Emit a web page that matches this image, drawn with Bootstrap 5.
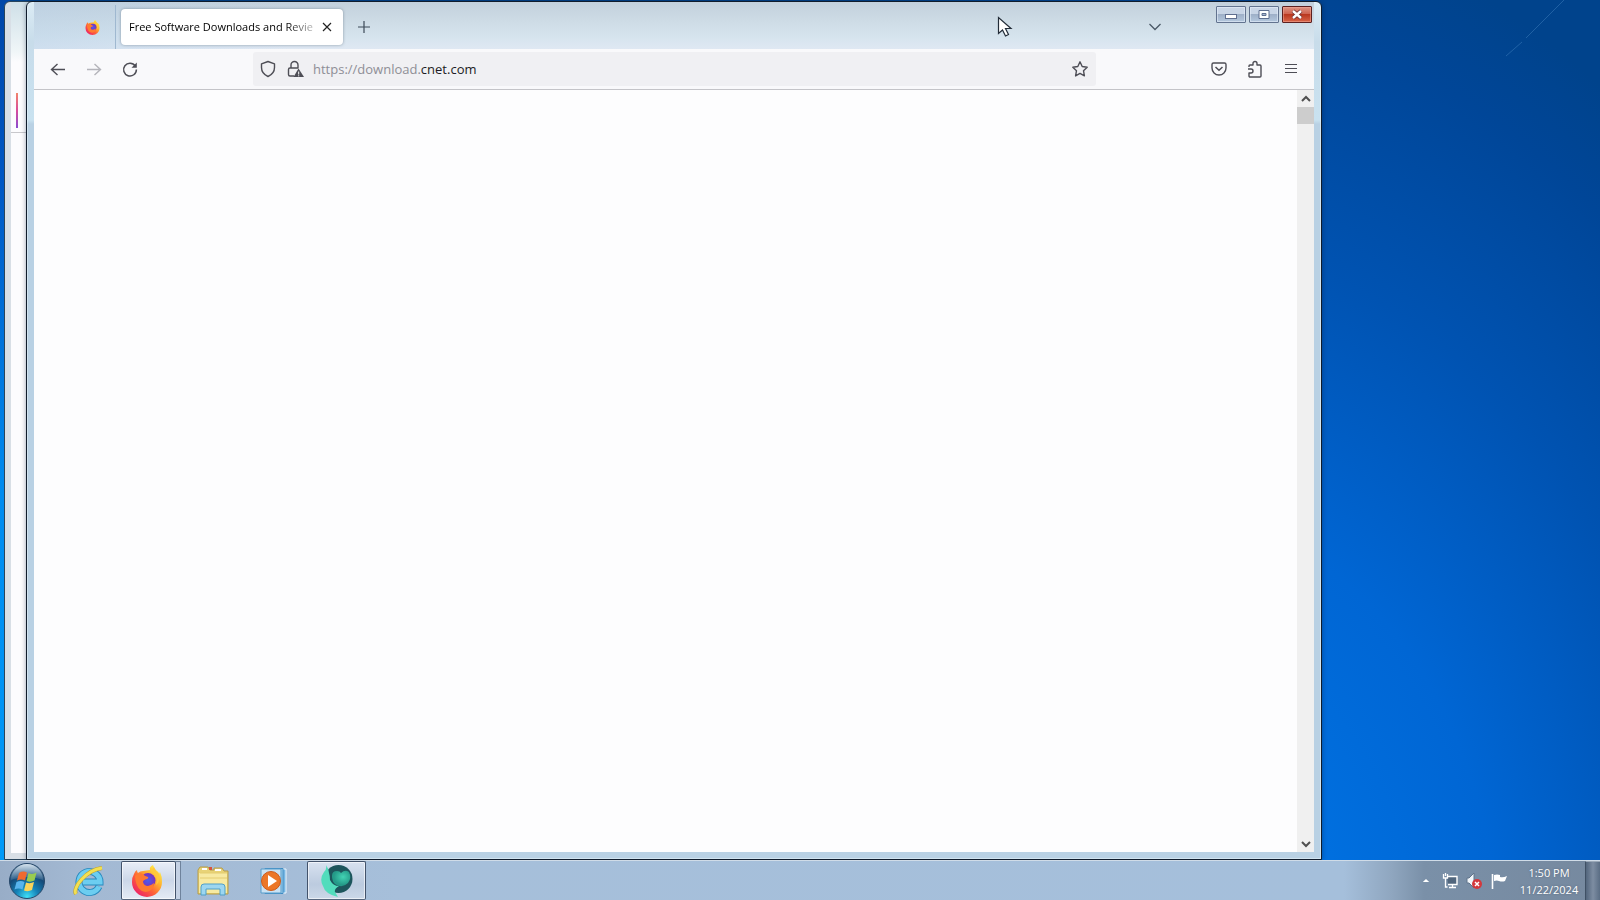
<!DOCTYPE html>
<html lang="en">
<head>
<meta charset="utf-8">
<meta name="viewport" content="width=device-width, initial-scale=1">
<title>Desktop</title>
<link href="https://cdn.jsdelivr.net/npm/bootstrap@5.3.0/dist/css/bootstrap.min.css" rel="stylesheet">
<style>
  body { font-family: "Open Sans", "Noto Sans", sans-serif; font-size: 11px; line-height: 16px; color: #111; }
  svg { display: block; flex: none; }
  button { border: 0; padding: 0; background: none; color: inherit; }

  .desktop {
    background:
      linear-gradient(#0046a8 0, #0058c4 20%, #008cf0 55%, #009cfa 100%) 0 0 / 10px 100% no-repeat,
      radial-gradient(ellipse 760px 1050px at 1180px 960px, #0078e8 0, #0070e0 20%, #0066d4 42%, #0053b2 68%, #004698 90%, #00438c 100%);
    background-color: #00438c;
  }
  .light-streak { right: 36px; top: 0; }

  /* windows */
  .win { bottom: 0; top: 1px; border: 1px solid #101c2c; }
  .win-back { left: 4px; width: 60px; background: #d8dfe6; border-color: #29455c; border-radius: 6px 0 0 0; padding: 0 0 6px 6px; }
  .win-back .pane { background: linear-gradient(#cfe0e8 0, #f0f6f8 50px, #fcfcfe 60px, #fcfcfe 100%); }
  .win-back .pane-top { height: 131px; border-bottom: 1px solid #c8c8cc; }
  .flame { width: 2px; height: 35px; margin: 0 0 4px 5px; background: linear-gradient(#f2856a, #d84c9c 50%, #8a4cd0); }
  .win-front { left: 26px; right: 278px; border-radius: 6px 6px 0 0; padding: 0 7px 7px;
    background: linear-gradient(#dcecf5 0, #c8dcea 40px, #c9e2f0 118px, #b9d1e4 122px, #b9d1e4 100%); box-shadow: inset 0 0 0 1px #e8f6fc88, 0 0 5px #00183866; }
  .titlebar { height: 47px; background: linear-gradient(90deg, #b6d0e866 0, #c8dce800 20%, #c8dce800 100%), linear-gradient(#c2d0dc 0, #ccdae4 35%, #d6e4ee 75%, #dfe8f3 100%); }
  .pinned { width: 82px; border-right: 1px solid #9fb8d0; padding-right: 15px; }
  .tab-page { width: 222px; height: 36px; margin: 0 0 0 5px; background: #fff; border-radius: 4px; box-shadow: 0 0 3px #48586888; padding: 0 11px 0 8px; color: #000; }
  .tab-title { white-space: nowrap; -webkit-mask-image: linear-gradient(90deg, #000 85%, #0004 100%); mask-image: linear-gradient(90deg, #000 85%, #0004 100%); }
  .tab-row { padding-top: 3px; }
  .new-tab { margin-left: 14px; }
  .caption { gap: 3px; padding: 4px 2px 0 0; }
  .cap-btn { width: 30px; height: 17px; border: 1px solid #62738f; border-radius: 1px; box-shadow: inset 0 0 0 1px #e4eefa99; background: linear-gradient(#c8d5e6 0 45%, #9eb0c8 50%, #b4c8de 100%); display: grid; place-items: center; }
  .cap-close { border-color: #5c2020; box-shadow: inset 0 0 0 1px #f0a89888; background: linear-gradient(#dd9585 0, #cf6350 45%, #b93820 50%, #d86448 100%); }
  .all-tabs { margin-right: 54px; }

  .toolbar { height: 41px; background: #f9f9fb; border-bottom: 1px solid #c4c4c8; color: #4e4e56; padding: 0 14px 0 15px; }
  .nav-tools { gap: 18px; width: 204px; }
  .right-tools { gap: 18px; width: 204px; }
  .address { height: 34px; background: #f0f0f3; border-radius: 3px; gap: 9px; padding: 0 7px 0 6px; }
  .address-wrap { height: 20px; }
  .address-text { font-size: 13px; line-height: 20px; color: #8e8e96; pointer-events: none; inset: 0; white-space: pre; }
  .address-text b { font-weight: 400; color: #1c1c24; }
  .address input { border: 0; background: none; outline: 0; padding: 0; font-size: 13px; line-height: 20px; width: 100%; color: transparent; caret-color: #111; }

  .page { background: #fdfdfe; }
  .scroll-track { width: 17px; background: #f0f0f0; color: #505050; }
  .scroll-end { width: 17px; height: 17px; display: grid; place-items: center; }
  .scroll-thumb { height: 17px; background: #cdcdcd; }

  /* taskbar */
  .taskbar { height: 40px; border-top: 1px solid #d0dce8; background: linear-gradient(90deg, #98adc7 0, #a3b9d3 5%, #a6bfda 25%, #a5bfdb 84%, #8fa6bf 87%, #7a90a8 89%, #76899f 100%); z-index: 5; }
  .task { height: 39px; display: grid; place-items: center; }
  .task-start { width: 54px; }
  .task-ie { width: 67px; padding-left: 3px; }
  .task-run { border: 1px solid #43536b; border-bottom-color: #56677e; border-radius: 2px; box-shadow: inset 0 0 0 1px #ffffff99; background: linear-gradient(#d8e2f0, #bccbdf 60%, #cbd8e8); }
  .task-fx { width: 55px; padding-right: 4px; background: linear-gradient(#e8eef8, #ccd7e8 50%, #e4ebf5); }
  .task-stack { width: 5px; height: 39px; border: 1px solid #6f839c; border-left: 0; background: #c4d1e4; }
  .task-plain { width: 61px; padding-left: 3px; }
  .task-edge { width: 59px; margin-left: 4px; }
  .tray { color: #fff; gap: 8px; }
  .clock { width: 72px; text-align: center; line-height: 17px; margin-left: -2px; text-shadow: 0 0 2px #32465c88; }
  .peek { width: 15px; height: 39px; border-left: 1px solid #3f5064; border-top: 1px solid #9aa8b8; background: linear-gradient(90deg, #52657c, #7d8da2 50%, #5a6d84); margin-left: -8px; }
  .pointer { left: 997px; top: 16px; z-index: 8; pointer-events: none; }
</style>
</head>
<body>
<div class="desktop vh-100 d-flex flex-column overflow-hidden position-relative">
  <svg class="light-streak position-absolute" width="60" height="58" viewBox="0 0 60 58"><path d="M2 56L18 42M22 38L60 0" stroke="#5d9bd0" stroke-opacity=".35" fill="none"/></svg>

  <main class="flex-grow-1 position-relative">
    <section class="win win-back position-absolute d-flex flex-column" aria-label="Background window">
      <div class="pane flex-grow-1"><div class="pane-top d-flex align-items-end"><div class="flame"></div></div></div>
    </section>

    <section class="win win-front position-absolute d-flex flex-column" aria-label="Browser window">
      <header class="titlebar d-flex align-items-start">
        <div class="tab-row d-flex align-items-center flex-grow-1 h-100">
          <button class="pinned d-flex align-items-center justify-content-end h-100" aria-label="Pinned tab">
            <svg width="15" height="15" viewBox="0 0 32 32"><use href="#fox"/></svg>
          </button>
          <div class="tab-page d-flex align-items-center justify-content-between">
            <span class="tab-title">Free Software Downloads and Revie</span>
            <button aria-label="Close tab"><svg width="10" height="10" viewBox="0 0 10 10"><path d="M1 1l8 8M9 1l-8 8" stroke="#222" stroke-width="1.2"/></svg></button>
          </div>
          <button class="new-tab" aria-label="New tab"><svg width="14" height="14" viewBox="0 0 14 14"><path d="M7 1v12M1 7h12" stroke="#3c4a58" stroke-width="1.2"/></svg></button>
          <button class="all-tabs ms-auto" aria-label="List all tabs"><svg width="14" height="14" viewBox="0 0 14 14"><path d="M1.500 4L7 9.500 12.500 4" fill="none" stroke="#4a5866" stroke-width="1.300"/></svg></button>
        </div>
        <div class="caption d-flex">
          <button class="cap-btn" aria-label="Minimize"><svg width="12" height="11" viewBox="0 0 12 11"><rect x=".5" y="5.500" width="11" height="4" fill="#fff" stroke="#5f6f90"/></svg></button>
          <button class="cap-btn" aria-label="Maximize"><svg width="12" height="11" viewBox="0 0 12 11"><path d="M1 1.500h10v8H1z" fill="#fff" stroke="#5f6f90"/><path d="M4 4.500h4v2H4z" fill="#a8b8d0" stroke="#5f6f90"/></svg></button>
          <button class="cap-btn cap-close" aria-label="Close"><svg width="12" height="11" viewBox="0 0 12 11"><path d="M2 2l8 7M10 2L2 9" stroke="#6a2c2c" stroke-width="4"/><path d="M2 2l8 7M10 2L2 9" stroke="#fff" stroke-width="2.400"/></svg></button>
        </div>
      </header>

      <nav class="toolbar d-flex align-items-center" aria-label="Browser toolbar">
        <div class="nav-tools d-flex align-items-center">
          <button aria-label="Back"><svg width="18" height="18" viewBox="0 0 18 18"><path d="M8.500 4L2.500 9.500l6 5.500M2.500 9.500H16" fill="none" stroke="currentColor" stroke-width="1.400"/></svg></button>
          <button aria-label="Forward" disabled><svg width="18" height="18" viewBox="0 0 18 18"><path d="M9.500 4l6 5.500-6 5.500M15.500 9.500H2" fill="none" stroke="#b4b4ba" stroke-width="1.400"/></svg></button>
          <button aria-label="Reload"><svg width="18" height="18" viewBox="0 0 18 18"><path d="M14.300 6A6.400 6.400 0 1 0 15.400 9.500" fill="none" stroke="currentColor" stroke-width="1.500"/><path d="M15.800 2.500v5.300h-5.300z" fill="currentColor"/></svg></button>
        </div>
        <div class="address d-flex align-items-center flex-grow-1">
          <button aria-label="Tracking protection"><svg width="18" height="18" viewBox="0 0 18 18"><path d="M9 1.500l6.500 2.300v3.700c0 4.300-2.700 7.300-6.500 9-3.800-1.700-6.500-4.700-6.500-9V3.800z" fill="none" stroke="currentColor" stroke-width="1.400" stroke-linejoin="round"/></svg></button>
          <button aria-label="Connection not secure"><svg width="18" height="18" viewBox="0 0 18 18"><path d="M5 8V5a3.500 3.500 0 0 1 7 0v3M8 16H4a1.500 1.500 0 0 1-1.500-1.500v-5A1.500 1.500 0 0 1 4 8h8.500" fill="none" stroke="currentColor" stroke-width="1.400"/><path d="M12.500 8.500L18 17H7.500z" fill="currentColor"/><path d="M12.700 11.500v3M12.700 15.300v1" stroke="#fff"/></svg></button>
          <div class="address-wrap flex-grow-1 position-relative">
            <input type="text" aria-label="Address">
            <div class="address-text position-absolute">https://download.<b>cnet.com</b></div>
          </div>
          <button aria-label="Bookmark"><svg width="18" height="18" viewBox="0 0 18 18"><path d="M9 1.800l2.200 4.700 5 .7-3.700 3.500.9 5.200L9 13.400l-4.400 2.500.9-5.200L1.800 7.200l5-.7z" fill="none" stroke="currentColor" stroke-width="1.400" stroke-linejoin="round"/></svg></button>
        </div>
        <div class="right-tools d-flex align-items-center justify-content-end">
          <button aria-label="Save to Pocket"><svg width="18" height="18" viewBox="0 0 18 18"><path d="M3.500 3h11A1.500 1.500 0 0 1 16 4.500V8A7 7 0 0 1 2 8V4.500A1.500 1.500 0 0 1 3.500 3z" fill="none" stroke="currentColor" stroke-width="1.400"/><path d="M5.500 7L9 10.300 12.500 7" fill="none" stroke="currentColor" stroke-width="1.500"/></svg></button>
          <button aria-label="Extensions"><svg width="18" height="18" viewBox="0 0 18 18"><path d="M3 7V6a1 1 0 0 1 1-1h3V3.500a2 2 0 0 1 4 0V5h3a1 1 0 0 1 1 1v10a1 1 0 0 1-1 1H4a1 1 0 0 1-1-1v-3h2a2 2 0 0 0 0-4H2" fill="none" stroke="currentColor" stroke-width="1.400" stroke-linejoin="round"/></svg></button>
          <button aria-label="Menu"><svg width="18" height="18" viewBox="0 0 18 18"><path d="M3 4.500h12M3 8.500h12M3 12.500h12" stroke="currentColor" stroke-width="1.200"/></svg></button>
        </div>
      </nav>

      <div class="page d-flex flex-grow-1 justify-content-end">
        <div class="scroll-track d-flex flex-column">
          <button class="scroll-end" aria-label="Scroll up"><svg width="10" height="8" viewBox="0 0 10 8"><path d="M1 6l4-4 4 4" fill="none" stroke="currentColor" stroke-width="2"/></svg></button>
          <div class="scroll-thumb"></div>
          <button class="scroll-end mt-auto" aria-label="Scroll down"><svg width="10" height="8" viewBox="0 0 10 8"><path d="M1 2l4 4 4-4" fill="none" stroke="currentColor" stroke-width="2"/></svg></button>
        </div>
      </div>
    </section>
  </main>

  <footer class="taskbar d-flex align-items-center">
    <button class="task task-start" aria-label="Start">
      <svg width="38" height="38" viewBox="0 0 38 38">
        <defs>
          <radialGradient id="orb" cx=".5" cy=".95" r=".9"><stop offset="0" stop-color="#3fe0f8"/><stop offset=".35" stop-color="#1583b8"/><stop offset=".7" stop-color="#154a78"/><stop offset="1" stop-color="#5b7f9e"/></radialGradient>
          <linearGradient id="gloss" x2="0" y2="1"><stop stop-color="#e8f2fa" stop-opacity=".85"/><stop offset="1" stop-color="#a8c4dc" stop-opacity=".15"/></linearGradient>
        </defs>
        <circle cx="19" cy="19" r="17.500" fill="url(#orb)" stroke="#27486a"/>
        <path d="M3 18a16 16 0 0 1 32 0q-16-6-32 0z" fill="url(#gloss)"/>
        <path d="M11 11q4-2.500 8-.5l-2 8q-4-2-8 0z" fill="#f06a30"/><path d="M20.500 11q4 2 8-.5l-2 8q-4 2-8 .5z" fill="#98cc50"/>
        <path d="M8.500 20q4-2 8 0l-2 7.500q-4-2-8 0z" fill="#58b4ee"/><path d="M18 20.500q4 1.500 8-.5l-2 8q-4 2-8 .5z" fill="#fbd45a"/>
      </svg>
    </button>
    <button class="task task-ie" aria-label="Internet Explorer">
      <svg width="32" height="32" viewBox="0 0 32 32">
        <path d="M26 21.500A10.500 10.500 0 1 1 27 17H10" fill="none" stroke="#2788bd" stroke-width="7"/>
        <path d="M26 21.500A10.500 10.500 0 1 1 27 17H10" fill="none" stroke="#6ccdf0" stroke-width="5.200"/>
        <path d="M3 29C-1 23 13 5 29 3" fill="none" stroke="#c0a32c" stroke-width="4"/>
        <path d="M3 29C-1 23 13 5 29 3" fill="none" stroke="#f2e052" stroke-width="2.800"/>
      </svg>
    </button>
    <button class="task task-run task-fx" aria-label="Firefox">
      <svg width="32" height="32" viewBox="0 0 32 32">
        <defs>
          <linearGradient id="fire" x1=".9" y1=".1" x2=".2" y2=".9"><stop stop-color="#fff04a"/><stop offset=".35" stop-color="#ffb02e"/><stop offset=".65" stop-color="#ff6238"/><stop offset="1" stop-color="#ee2863"/></linearGradient>
          <radialGradient id="globe"><stop stop-color="#4b5df0"/><stop offset="1" stop-color="#7b31b8"/></radialGradient>
          <g id="fox"><path d="M3 9q1-3 3-4 0 2 1 3 2-2 5-2l7-1q-1-3 3-5 1 4 4 6 2 1 2 3l1-2q2 4 2 10a15 15 0 0 1-30 0q0-5 2-8z" fill="url(#fire)"/><circle cx="17" cy="15.500" r="7.500" fill="url(#globe)"/><path d="M4 11q3-4 8-2 1 2 5 3 1 1-1 2-4 1-4 3 1 4 5 4 4-1 6-3 0 8-8 9-10-1-11-16z" fill="#ff7a30"/><path d="M21 5q7 6 4 15 5-4 3-11-3-2-5-7z" fill="#ffc83c"/></g>
        </defs>
        <use href="#fox"/>
      </svg>
    </button>
    <div class="task-stack"></div>
    <button class="task task-plain" aria-label="File Explorer">
      <svg width="34" height="32" viewBox="0 0 34 32"><path d="M2 5l2-3h8l2 3h4V3h8l2 3h4v23H2z" fill="#e8d377" stroke="#b79c48"/><path d="M3 8h28v20H3z" fill="#f7eaa2"/><path d="M6 4h5M19 5h6" stroke="#fff" stroke-width="2"/><path d="M13 3.500h3" stroke="#d8543c" stroke-width="3"/><path d="M4 8h27M4 13h27" stroke="#e4cc70"/><path d="M5 30V22q0-3 3-3h18q3 0 3 3v8h-5v-6H10v6z" fill="#9cd6f0" stroke="#4f9fc9"/></svg>
    </button>
    <button class="task task-plain" aria-label="Media Player">
      <svg width="30" height="28" viewBox="0 0 30 28"><path d="M9 2h18v24H9z" fill="#78b6e2" stroke="#eaf6ff"/><path d="M6 1.500h18v25H6z" fill="#a5d3f0" stroke="#3f8cc3"/><path d="M2 2h20v24H2z" fill="#c9e2f4" stroke="#579cca"/><circle cx="12" cy="14" r="9.500" fill="#ec7728" stroke="#cc5b1c"/><path d="M9 8l9 6-9 6z" fill="#fff"/></svg>
    </button>
    <button class="task task-run task-edge" aria-label="Browser app">
      <svg width="34" height="34" viewBox="0 0 34 34">
        <defs><radialGradient id="teal" cx=".6" cy=".4"><stop stop-color="#43d3b4"/><stop offset="1" stop-color="#249a88"/></radialGradient></defs>
        <circle cx="18.500" cy="15" r="14" fill="#1d555c"/>
        <path d="M12 12q0-5 5-5 3 0 4 2 4-4 8-1 3 6-1 11-6 6-13 1-3-3-3-8z" fill="url(#teal)"/>
        <path d="M6 1q3 4 3 8 1 3 1 7 3 6 9 6-5 3-4 6l3 5Q5 30 3 22-1 15 4 8q3-3 2-7z" fill="#52dcbc"/>
      </svg>
    </button>
    <div class="tray ms-auto d-flex align-items-center">
      <button class="me-1" aria-label="Show hidden icons"><svg width="8" height="5" viewBox="0 0 10 6"><path d="M1 5l4-4 4 4z" fill="#fff"/></svg></button>
      <svg width="16" height="16" viewBox="0 0 16 16"><path d="M5 3.500h10v8H6" fill="#51667d" stroke="#fff" stroke-width="1.400"/><path d="M7 14.500h7M10.500 12v2M1.500 1v4h4V1M3.500 0v3M3.500 5v9h2" fill="none" stroke="#fff" stroke-width="1.300"/></svg>
      <svg width="17" height="16" viewBox="0 0 17 16"><path d="M1 5h2l5-5v15l-5-5H1z" fill="#f2f6fa" stroke="#60748b"/><circle cx="11" cy="11" r="5" fill="#d4383c"/><path d="M9 9l4 4M13 9l-4 4" stroke="#fff" stroke-width="1.500"/></svg>
      <svg width="16" height="16" viewBox="0 0 16 16"><path d="M1.500 1v15" stroke="#fff" stroke-width="1.600"/><path d="M3 2q3-1 6 0v2q3 1 7-1l-2 5q-3 1-6 0-2-1-5 0z" fill="#fff"/></svg>
      <div class="clock">1:50 PM<br>11/22/2024</div>
      <button class="peek" aria-label="Show desktop"></button>
    </div>
  </footer>

  <svg class="pointer position-absolute" width="17" height="24" viewBox="0 0 17 24"><path d="M1.500 1.500v16l4-3.500 3 6 3-1.500-3-6h5.500z" fill="#fff" stroke="#222c38" stroke-width="1.200"/></svg>
</div>
<script src="https://cdn.jsdelivr.net/npm/bootstrap@5.3.0/dist/js/bootstrap.bundle.min.js"></script>
</body>
</html>
